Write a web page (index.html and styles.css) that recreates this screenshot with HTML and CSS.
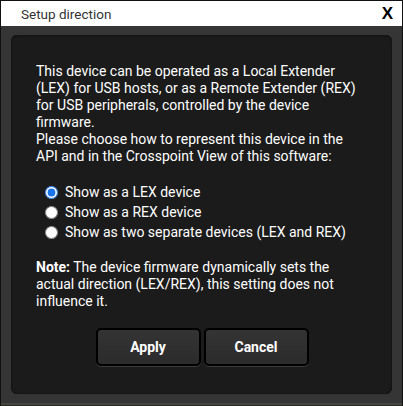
FILE: index.html
```html
<!DOCTYPE html>
<html>
<head>
<meta charset="utf-8">
<link rel="stylesheet" href="styles.css">
</head>
<body>
<div class="window">
  <div class="titlebar">
    <span class="title">Setup direction</span>
    <span class="close">X</span>
  </div>
  <div class="frame">
    <div class="panel">
      <p class="intro">This device can be operated as a Local Extender (LEX) for USB hosts, or as a Remote Extender (REX) for USB peripherals, controlled by the device firmware.<br>Please choose how to represent this device in the API and in the Crosspoint View of this software:</p>
      <div class="options">
        <label class="option"><input type="radio" name="dir" checked><span>Show as a LEX device</span></label>
        <label class="option"><input type="radio" name="dir"><span>Show as a REX device</span></label>
        <label class="option"><input type="radio" name="dir"><span>Show as two separate devices (LEX and REX)</span></label>
      </div>
      <p class="note"><b>Note:</b> The device firmware dynamically sets the actual direction (LEX/REX), this setting does not influence it.</p>
      <div class="buttons">
        <button class="btn">Apply</button>
        <button class="btn">Cancel</button>
      </div>
    </div>
  </div>
</div>
</body>
</html>
```

FILE: styles.css
```css
* { box-sizing: border-box; }
html, body { margin: 0; padding: 0; background: #3a3a20; }
body { font-family: Roboto, "Liberation Sans", sans-serif; }
.window {
  width: 403px;
  height: 406px;
  border: 1px solid #111;
  border-bottom-color: #2a2a1a;
  display: flex;
  flex-direction: column;
  background: #333333;
}
.titlebar {
  height: 25px;
  background: #ffffff;
  display: flex;
  align-items: center;
  justify-content: space-between;
  padding: 0 9px 0 20px;
  flex: none;
}
.title { font-size: 13.5px; color: #333; }
.close { font-size: 17px; font-weight: bold; color: #000; font-family: "Liberation Sans", Arial, sans-serif; }
.frame {
  flex: 1;
  padding: 9px 10px 9px 10px;
  background: #353535;
  border-bottom: 2px solid #444;
}
.panel {
  height: 100%;
  background: #1b1b1b;
  border-radius: 6px;
  box-shadow: inset 0 0 0 1px #151515, inset 0 1px 2px #0e0e0e;
  padding: 28px 28px 0 25px;
  color: #fff;
  font-size: 14px;
  line-height: 17px;
}
.intro { margin: 0; }
.options { margin: 17px 0 0 9px; display: flex; flex-direction: column; }
.option { display: flex; align-items: center; height: 20px; }
.option input {
  margin: 0 7px 0 0;
  width: 13px; height: 13px;
  accent-color: #1a73e8;
}
.note { margin: 17px 0 0 0; }
.buttons { display: flex; justify-content: center; gap: 3px; margin-top: 18px; padding-left: 4px; }
.btn {
  width: 105px;
  height: 38px;
  border: 2px solid #000;
  border-radius: 5px;
  background: linear-gradient(#343434, #2b2b2b);
  box-shadow: 0 1px 0 #3c3c3c;
  color: #fff;
  font-family: Roboto, "Liberation Sans", sans-serif;
  font-size: 14px;
  font-weight: bold;
  padding: 0;
}
```
